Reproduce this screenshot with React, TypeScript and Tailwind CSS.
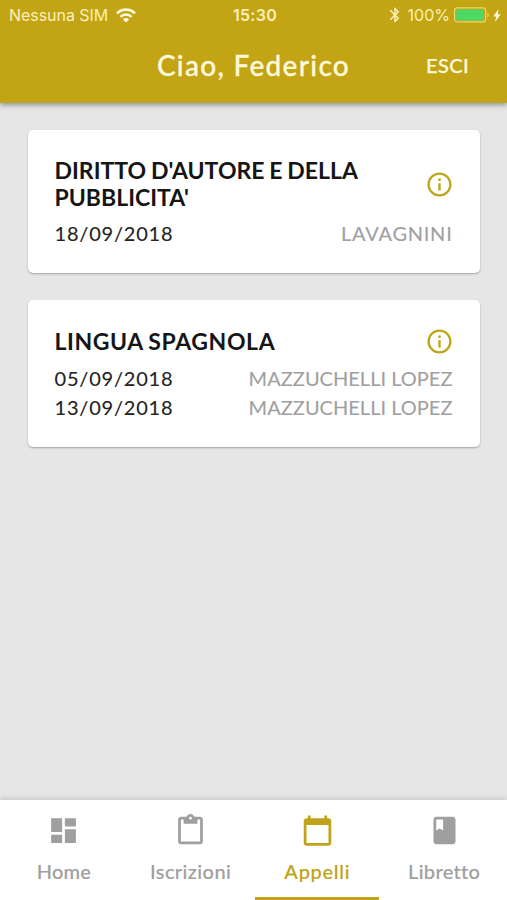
import clsx from "clsx";
import type { IconType } from "react-icons";
import { MdBluetooth, MdCalendarToday, MdClass, MdContentPaste, MdDashboard, MdInfoOutline } from "react-icons/md";

interface Session {
  date: string;
  teacher: string;
  spacing: string;
}

interface Exam {
  title: string;
  spacing: string;
  sessions: Session[];
}

const exams: Exam[] = [
  {
    title: "DIRITTO D'AUTORE E DELLA PUBBLICITA'",
    spacing: "tracking-[0.02px] [word-spacing:-0.9px]",
    sessions: [{ date: "18/09/2018", teacher: "LAVAGNINI", spacing: "tracking-[0.75px]" }],
  },
  {
    title: "LINGUA SPAGNOLA",
    spacing: "tracking-[0.6px] [word-spacing:-1px]",
    sessions: [
      { date: "05/09/2018", teacher: "MAZZUCHELLI LOPEZ", spacing: "tracking-[0.02px]" },
      { date: "13/09/2018", teacher: "MAZZUCHELLI LOPEZ", spacing: "tracking-[0.02px]" },
    ],
  },
];

const tabs: { label: string; icon: IconType; spacing: string }[] = [
  { label: "Home", icon: MdDashboard, spacing: "tracking-[0.2px]" },
  { label: "Iscrizioni", icon: MdContentPaste, spacing: "tracking-[0.4px]" },
  { label: "Appelli", icon: MdCalendarToday, spacing: "tracking-[0.7px]" },
  { label: "Libretto", icon: MdClass, spacing: "tracking-[0.3px]" },
];

function StatusBar() {
  return (
    <div className="grid h-[30px] grid-cols-3 items-center pl-[9px] pr-[6px] font-['Inter',sans-serif] text-[16px] text-[#fcf0b8]">
      <div className="flex items-center gap-[8px] whitespace-nowrap">
        <span className="tracking-[-0.05px]">Nessuna SIM</span>
        <svg width="20" height="15" viewBox="0 0 20 15" fill="none" stroke="#fff9dc" strokeWidth="2.6">
          <path d="M1 5.4a12.7 12.7 0 0 1 18 0" />
          <path d="M4.4 8.9a7.9 7.9 0 0 1 11.2 0" />
          <path d="M10 14.6 6.9 11.4a4.4 4.4 0 0 1 6.2 0z" fill="#fff9dc" stroke="none" />
        </svg>
      </div>
      <span className="text-center font-semibold tracking-[0.3px]">15:30</span>
      <div className="flex items-center justify-end whitespace-nowrap">
        <MdBluetooth className="mr-[4px] h-[18px] w-[18px]" />
        <span className="mr-[4px]">100%</span>
        <svg width="36" height="16" viewBox="0 0 36 16">
          <rect x="0.6" y="0.9" width="31" height="14" rx="2.5" fill="none" stroke="#ecd66c" strokeWidth="1.2" />
          <rect x="2.2" y="2.4" width="27.8" height="11" rx="1" fill="#4cd964" />
          <path d="M33.4 5.5c1.8.7 1.8 4.3 0 5z" fill="#ecd66c" />
        </svg>
        <svg className="ml-[3px]" width="8" height="13" viewBox="0 0 8 13" fill="#fff9dc">
          <path d="M5.6 0 .2 7.4h3L2 13l5.8-7.8h-3z" />
        </svg>
      </div>
    </div>
  );
}

function ExamCard({ exam }: { exam: Exam }) {
  return (
    <div className="rounded-[5px] bg-white px-[27px] pt-[27px] pb-[25px] shadow-[0_1px_2px_rgba(0,0,0,0.3)]">
      <div className="flex items-center justify-between">
        <h2 className={clsx("w-[330px] text-[23px] leading-[27px] font-bold text-[#151515]", exam.spacing)}>
          {exam.title}
        </h2>
        <MdInfoOutline className="-mr-[1px] h-[29px] w-[29px] text-[#bda51c]" />
      </div>
      <div className="mt-[7px]">
        {exam.sessions.map((s) => (
          <div key={s.date} className="flex h-[29.5px] items-center justify-between text-[20px]">
            <span className="tracking-[0.8px] text-[#222] [-webkit-text-stroke:0.1px]">{s.date}</span>
            <span className={clsx("text-[#a0a0a0] [-webkit-text-stroke:0.1px]", s.spacing)}>{s.teacher}</span>
          </div>
        ))}
      </div>
    </div>
  );
}

export default function App() {
  return (
    <div className="flex h-[900px] w-[507px] flex-col overflow-hidden bg-[#e6e6e6] font-['Lato',sans-serif]">
      <header className="z-10 h-[103px] bg-[#c2a414] shadow-[0_2px_5px_rgba(60,60,80,0.5)]">
        <StatusBar />
        <div className="grid h-[69px] grid-cols-[100px_1fr_100px] items-center text-[#fff9dc]">
          <h1 className="col-start-2 text-center text-[28px] font-medium tracking-[1.3px] whitespace-nowrap [-webkit-text-stroke:0.3px]">
            Ciao, Federico
          </h1>
          <button className="pl-[19px] text-left text-[20px] font-medium tracking-[0.4px] [-webkit-text-stroke:0.25px]">
            ESCI
          </button>
        </div>
      </header>

      <main className="flex flex-1 flex-col gap-[27.5px] px-[27.5px] pt-[27px]">
        {exams.map((exam) => (
          <ExamCard key={exam.title} exam={exam} />
        ))}
      </main>

      <nav className="grid h-[100px] grid-cols-4 bg-white shadow-[0_-2px_5px_rgba(0,0,0,0.12)]">
        {tabs.map(({ label, icon: Icon, spacing }) => {
          const active = label === "Appelli";
          return (
            <button
              key={label}
              className={clsx(
                "mx-[1.5px] flex flex-col items-center border-b-[3px] pt-[14px] pl-[1px] font-medium",
                active ? "border-[#bfa31a] text-[#bfa31a]" : "border-transparent text-[#9f9f9f]"
              )}
            >
              <Icon className="h-[33px] w-[33px]" />
              <span className={clsx("mt-[10px] text-[20px] leading-[28px] [-webkit-text-stroke:0.15px]", spacing)}>
                {label}
              </span>
            </button>
          );
        })}
      </nav>
    </div>
  );
}
